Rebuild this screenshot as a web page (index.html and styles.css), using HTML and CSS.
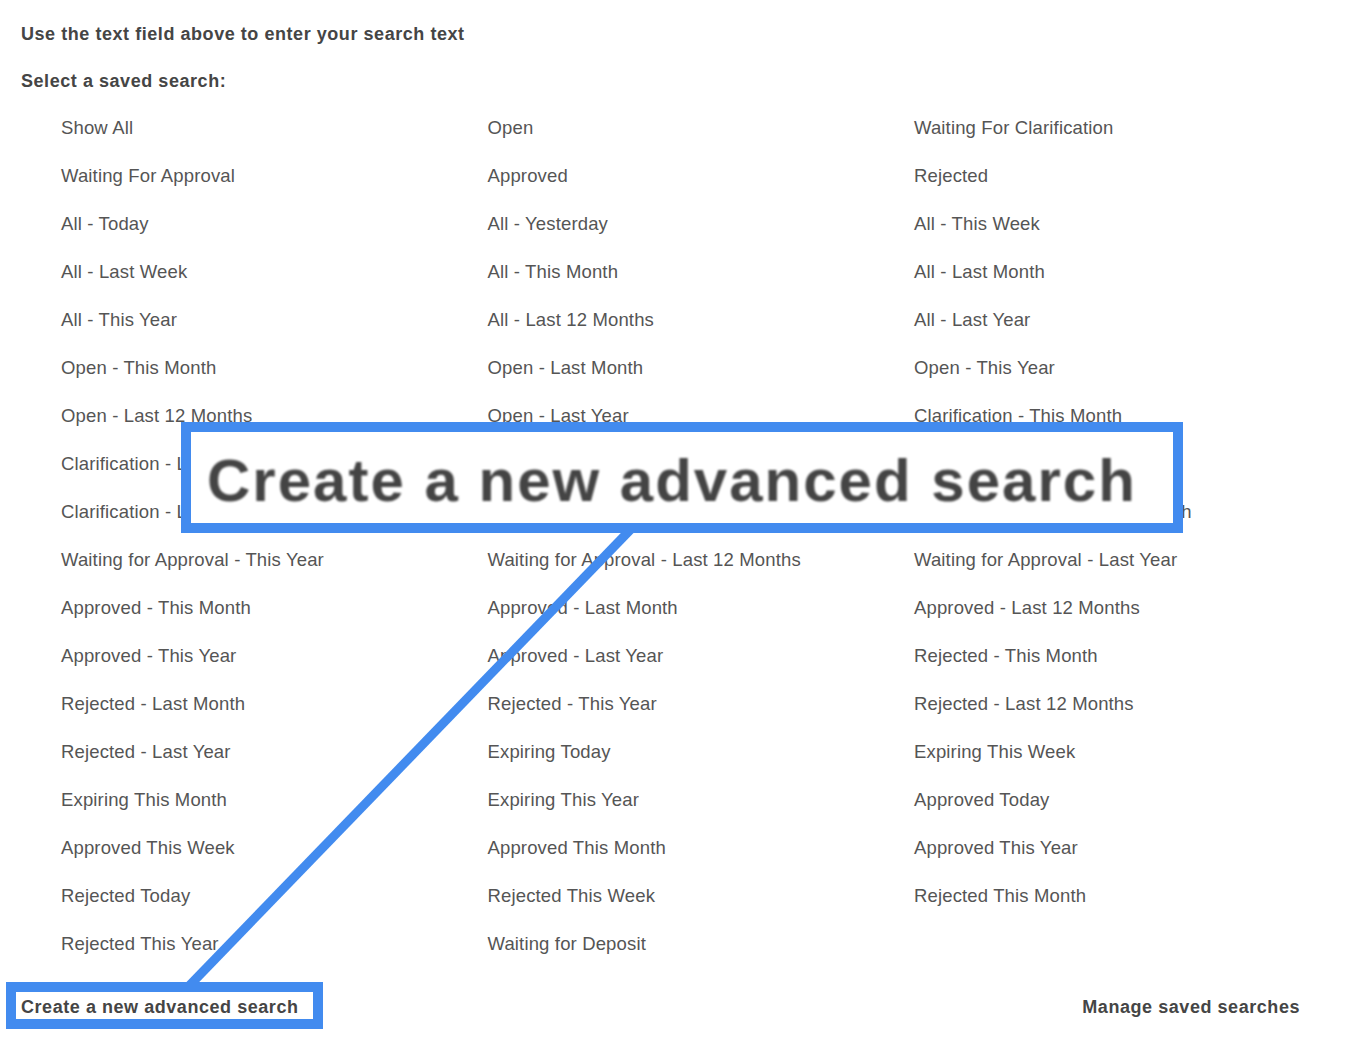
FILE: index.html
```html
<!DOCTYPE html>
<html lang="en">
<head>
  <meta charset="UTF-8" />
  <title>Saved searches</title>
  <link rel="stylesheet" href="styles.css">
</head>
<body>
  <div class="page">
    <p class="hint">Use the text field above to enter your search text</p>
    <p class="label">Select a saved search:</p>

    <ul class="searches">
      <li>Show All</li>
      <li>Open</li>
      <li>Waiting For Clarification</li>
      <li>Waiting For Approval</li>
      <li>Approved</li>
      <li>Rejected</li>
      <li>All - Today</li>
      <li>All - Yesterday</li>
      <li>All - This Week</li>
      <li>All - Last Week</li>
      <li>All - This Month</li>
      <li>All - Last Month</li>
      <li>All - This Year</li>
      <li>All - Last 12 Months</li>
      <li>All - Last Year</li>
      <li>Open - This Month</li>
      <li>Open - Last Month</li>
      <li>Open - This Year</li>
      <li>Open - Last 12 Months</li>
      <li>Open - Last Year</li>
      <li>Clarification - This Month</li>
      <li>Clarification - Last Month</li>
      <li>Clarification - This Year</li>
      <li>Clarification - Last 12 Months</li>
      <li>Clarification - Last Year</li>
      <li>Waiting for Approval - This Month</li>
      <li>Waiting for Approval - Last Month</li>
      <li>Waiting for Approval - This Year</li>
      <li>Waiting for Approval - Last 12 Months</li>
      <li>Waiting for Approval - Last Year</li>
      <li>Approved - This Month</li>
      <li>Approved - Last Month</li>
      <li>Approved - Last 12 Months</li>
      <li>Approved - This Year</li>
      <li>Approved - Last Year</li>
      <li>Rejected - This Month</li>
      <li>Rejected - Last Month</li>
      <li>Rejected - This Year</li>
      <li>Rejected - Last 12 Months</li>
      <li>Rejected - Last Year</li>
      <li>Expiring Today</li>
      <li>Expiring This Week</li>
      <li>Expiring This Month</li>
      <li>Expiring This Year</li>
      <li>Approved Today</li>
      <li>Approved This Week</li>
      <li>Approved This Month</li>
      <li>Approved This Year</li>
      <li>Rejected Today</li>
      <li>Rejected This Week</li>
      <li>Rejected This Month</li>
      <li>Rejected This Year</li>
      <li>Waiting for Deposit</li>
    </ul>

    <div class="footer">
      <a class="action" href="#">Create a new advanced search</a>
      <a class="action" href="#">Manage saved searches</a>
    </div>
  </div>

  <!-- callout annotation -->
  <svg class="connector" width="1360" height="1040" viewBox="0 0 1360 1040">
    <line x1="632" y1="528" x2="189" y2="986" stroke="#428bef" stroke-width="9" />
  </svg>
  <div class="highlight"></div>
  <div class="zoom-box"><span>Create a new advanced search</span></div>
</body>
</html>
```

FILE: styles.css
```css
:root {
  --callout: #428bef;
  --heading: #454545;
  --item: #555;
}
body {
  margin: 0;
  background: #fff;
  font-family: 'Liberation Sans', Arial, sans-serif;
  color: var(--heading);
}
.page {
  padding: 22px 60px 0 21px;
}
.hint,
.label {
  margin: 0;
  font-size: 18px;
  font-weight: bold;
  letter-spacing: 0.55px;
  line-height: 24px;
}
.label {
  margin-top: 23px;
}
.searches {
  list-style: none;
  margin: 11px 0 0 0;
  padding: 0 0 0 40px;
  display: grid;
  grid-template-columns: repeat(3, 426.5px);
}
.searches li {
  font-size: 18.5px;
  letter-spacing: 0.15px;
  line-height: 48px;
  color: var(--item);
  white-space: nowrap;
}
.footer {
  margin-top: 27px;
  display: flex;
  justify-content: space-between;
}
.action {
  font-size: 18px;
  font-weight: bold;
  letter-spacing: 0.55px;
  line-height: 24px;
  color: var(--heading);
  text-decoration: none;
}
.connector {
  position: absolute;
  left: 0;
  top: 0;
  pointer-events: none;
}
.highlight {
  position: absolute;
  left: 6px;
  top: 982px;
  width: 297px;
  height: 27px;
  border: 10px solid var(--callout);
}
.zoom-box {
  position: absolute;
  left: 181px;
  top: 422px;
  width: 966px;
  height: 91px;
  padding-left: 16px;
  border: 10px solid var(--callout);
  background: #fff;
  display: flex;
  align-items: center;
}
.zoom-box span {
  font-size: 60px;
  font-weight: bold;
  letter-spacing: 2px;
  line-height: 1;
  margin-top: 6px;
  color: #444;
  white-space: nowrap;
  filter: blur(1.3px);
}
```
